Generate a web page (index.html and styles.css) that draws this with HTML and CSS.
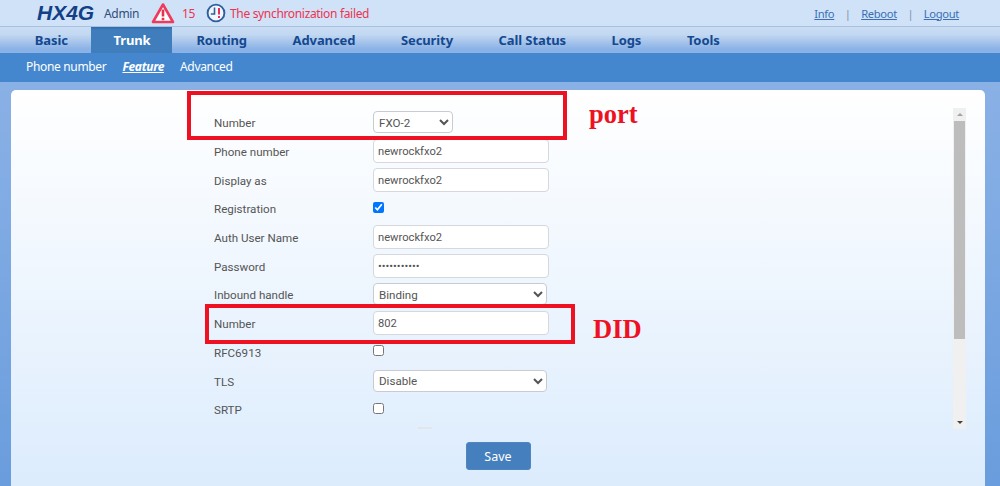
FILE: index.html
```html
<!DOCTYPE html>
<html lang="en">
<head>
    <meta charset="UTF-8">
    <title>HX4G</title>
    <link rel="stylesheet" href="styles.css">
</head>
<body>
    <div class="header">
        <div class="logo">HX4G</div>
        <div class="user">Admin</div>
        <svg class="alarm-icon" viewBox="0 0 24 22" width="24" height="22">
            <path d="M12 2.5 L22 20 H2 Z" fill="#fff" stroke="#ee3b5d" stroke-width="2.6" stroke-linejoin="round"/>
            <path d="M12 7.5 V14.5" stroke="#e8304f" stroke-width="2.6"/>
            <rect x="10.7" y="15.8" width="2.6" height="2.4" fill="#e8304f"/>
        </svg>
        <div class="alarm-count">15</div>
        <svg class="sync-icon" viewBox="0 0 20 20" width="20" height="20">
            <circle cx="10" cy="10" r="8.4" fill="#f2f7fd" stroke="#2f5f9e" stroke-width="1.9"/>
            <path d="M8.5 4.5 V11 H4.8" fill="none" stroke="#2f5f9e" stroke-width="1.6"/>
            <path d="M13 5 V11.5" stroke="#e8304f" stroke-width="2"/>
            <rect x="12" y="13" width="2" height="2" fill="#e8304f"/>
        </svg>
        <div class="sync-text">The synchronization failed</div>
        <div class="links">
            <a href="#">Info</a>
            <span class="sep">|</span>
            <a href="#">Reboot</a>
            <span class="sep">|</span>
            <a href="#">Logout</a>
        </div>
    </div>

    <div class="nav">
        <div class="tab">Basic</div>
        <div class="tab active">Trunk</div>
        <div class="tab">Routing</div>
        <div class="tab">Advanced</div>
        <div class="tab">Security</div>
        <div class="tab">Call Status</div>
        <div class="tab">Logs</div>
        <div class="tab">Tools</div>
    </div>

    <div class="subnav">
        <div>Phone number</div>
        <div class="current">Feature</div>
        <div>Advanced</div>
    </div>

    <div class="content">
        <div class="card">
            <div class="scroll-row">
                <div class="form">
                    <div class="row">
                        <label>Number</label>
                        <select class="short"><option>FXO-2</option></select>
                    </div>
                    <div class="row">
                        <label>Phone number</label>
                        <input type="text" value="newrockfxo2">
                    </div>
                    <div class="row">
                        <label>Display as</label>
                        <input type="text" value="newrockfxo2">
                    </div>
                    <div class="row">
                        <label>Registration</label>
                        <input type="checkbox" checked>
                    </div>
                    <div class="row">
                        <label>Auth User Name</label>
                        <input type="text" value="newrockfxo2">
                    </div>
                    <div class="row">
                        <label>Password</label>
                        <input type="password" value="newrockfxo2">
                    </div>
                    <div class="row">
                        <label>Inbound handle</label>
                        <select><option>Binding</option></select>
                    </div>
                    <div class="row">
                        <label>Number</label>
                        <input type="text" value="802">
                    </div>
                    <div class="row">
                        <label>RFC6913</label>
                        <input type="checkbox">
                    </div>
                    <div class="row">
                        <label>TLS</label>
                        <select><option>Disable</option></select>
                    </div>
                    <div class="row">
                        <label>SRTP</label>
                        <input type="checkbox">
                    </div>
                    <div class="peek"></div>
                </div>
                <div class="scrollbar">
                    <div class="arrow-up"></div>
                    <div class="thumb"></div>
                    <div class="arrow-down"></div>
                </div>
            </div>
            <div class="actions">
                <button>Save</button>
            </div>
        </div>
    </div>

    <!-- annotations drawn over the screenshot -->
    <div class="mark mark-port"></div>
    <div class="mark mark-did"></div>
    <div class="note note-port">port</div>
    <div class="note note-did">DID</div>
</body>
</html>
```

FILE: styles.css
```css
* {
    margin: 0;
    padding: 0;
    box-sizing: border-box;
}

html, body {
    height: 486px;
    overflow: hidden;
}

body {
    font-family: 'Noto Sans', 'Open Sans', sans-serif;
    font-size: 12px;
    letter-spacing: -0.33px;
    color: #555;
    background-color: #6f9fe0;
    position: relative;
}

.header {
    height: 27px;
    display: flex;
    align-items: center;
    padding-left: 37px;
    background-color: #cfe2f7;
    border-bottom: 1px solid #a9c1dc;
}

.logo {
    font-family: 'Liberation Sans', sans-serif;
    font-size: 21px;
    font-weight: bold;
    font-style: italic;
    letter-spacing: 0;
    color: #123f85;
    width: 67px;
}

.user {
    color: #2f4f7a;
    width: 47px;
}

.alarm-icon {
    margin-right: 7px;
}

.alarm-count {
    color: #ee3350;
    width: 24px;
}

.sync-icon {
    margin-right: 4px;
}

.sync-text {
    color: #ee3350;
}

.links {
    margin-left: auto;
    margin-right: 41px;
    display: flex;
    gap: 10.5px;
    color: #7f92a8;
    font-size: 11.2px;
}

.links a {
    color: #3a6fb5;
}

.nav {
    height: 26px;
    display: flex;
    padding-left: 12px;
    background: linear-gradient(#c9ddf4 0%, #c2d7f1 30%, #8ab2e6 85%);
}

.tab {
    padding: 0 22.8px;
    line-height: 26px;
    font-size: 13px;
    font-weight: bold;
    letter-spacing: -0.1px;
    color: #14488f;
}

.tab.active {
    padding-right: 21px;
    margin-right: 2px;
    color: #fff;
    background: linear-gradient(#2f6bab 0, #3f7dbc 3px);
}

.subnav {
    height: 29px;
    display: flex;
    align-items: center;
    gap: 16px;
    padding: 0 0 2px 26px;
    background-color: #4487cf;
    color: #fff;
}

.subnav .current {
    font-weight: bold;
    font-style: italic;
    text-decoration: underline;
}

.content {
    height: 404px;
    padding: 8px 15px 0 11px;
    background: linear-gradient(#8ab1e6, #6a9ddd);
}

.card {
    height: 396px;
    border-radius: 5px 5px 0 0;
    background: linear-gradient(#ffffff, #dcecfd);
    padding-top: 18px;
}

.scroll-row {
    display: flex;
    height: 321px;
    padding-right: 19px;
}

.form {
    flex: 1;
    overflow: hidden;
    padding: 0 0 0 203px;
    font-family: 'Roboto', sans-serif;
    font-size: 11.6px;
    letter-spacing: 0;
}

.row {
    height: 28.7px;
    display: flex;
    align-items: center;
}

.row label {
    width: 159px;
    padding-top: 2px;
}

.row input[type="text"], .row input[type="password"] {
    width: 176px;
    height: 24px;
    padding: 1px 4px 0;
    border: 1px solid #d5d8dc;
    border-radius: 4px;
    background-color: #fff;
    font-family: inherit;
    font-size: 11.2px;
    color: #555;
}

.row select {
    width: 174px;
    height: 22px;
    padding: 1px 0 0 1px;
    border: 1px solid #c8cbd0;
    border-radius: 4px;
    background-color: #fff;
    font-family: inherit;
    font-size: 11.6px;
    color: #555;
}

.row select.short {
    width: 80px;
}

.row input[type="checkbox"] {
    width: 11px;
    height: 11px;
    margin: 0 0 2px 0;
}

/* top edge of the next row, cut off by the scroll area */
.peek {
    width: 14px;
    height: 2px;
    margin: 3px 0 0 204px;
    background-color: #e2e6ea;
}

.scrollbar {
    width: 13px;
    display: flex;
    flex-direction: column;
    background-color: #f0f0f0;
}

.thumb {
    height: 218px;
    margin: 0 1px;
    background-color: #bdbdbd;
}

.arrow-up, .arrow-down {
    width: 0;
    height: 0;
    margin: 5px auto;
    border-left: 3px solid transparent;
    border-right: 3px solid transparent;
}

.arrow-up {
    border-bottom: 3px solid #a3a3a3;
}

.arrow-down {
    margin-top: auto;
    border-top: 3px solid #444;
}

.actions {
    display: flex;
    justify-content: center;
    padding: 13px 0 0 0;
}

button {
    width: 65px;
    height: 28px;
    border: 1px solid #4f86c2;
    border-radius: 3px;
    background-color: #457fbd;
    color: #fff;
    font-family: inherit;
    font-size: 12.5px;
}

.mark {
    position: absolute;
    border: 4px solid #ee1122;
}

.mark-port {
    left: 187px;
    top: 91px;
    width: 380px;
    height: 49px;
}

.mark-did {
    left: 205px;
    top: 304px;
    width: 370px;
    height: 40px;
}

.note {
    position: absolute;
    font-family: 'Liberation Serif', serif;
    font-size: 26.5px;
    font-weight: bold;
    letter-spacing: 0;
    line-height: 30px;
    color: #ee1122;
}

.note-port {
    left: 589px;
    top: 99px;
}

.note-did {
    left: 593px;
    top: 314px;
}
```
